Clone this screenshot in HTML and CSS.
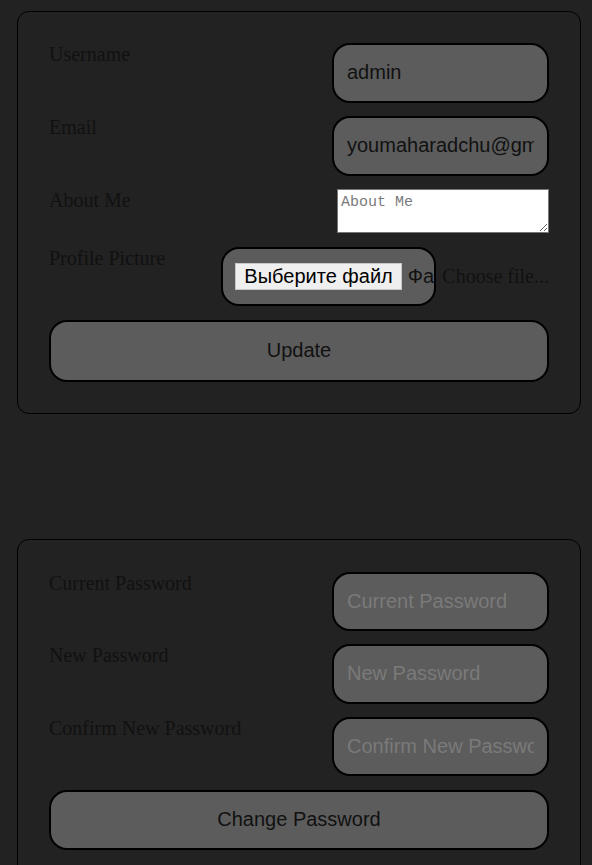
FILE: index.html
```html
<!DOCTYPE html>
<html>
<head>
<meta charset="utf-8">
<link rel="stylesheet" href="styles.css">
</head>
<body>
<main class="page">
  <form class="card">
    <div class="row">
      <label class="label">Username</label>
      <input class="field" type="text" value="admin">
    </div>
    <div class="row">
      <label class="label">Email</label>
      <input class="field" type="text" value="youmaharadchu@gmail.com">
    </div>
    <div class="row">
      <label class="label">About Me</label>
      <textarea class="about" placeholder="About Me"></textarea>
    </div>
    <div class="row">
      <label class="label">Profile Picture</label>
      <div class="file-group">
        <div class="file-input"><span class="file-btn">Выберите файл</span><span class="file-name">Файл не выбран</span></div>
        <span class="file-hint">Choose file...</span>
      </div>
    </div>
    <button type="button" class="btn">Update</button>
  </form>

  <form class="card card-second">
    <div class="row">
      <label class="label">Current Password</label>
      <input class="field" type="password" placeholder="Current Password">
    </div>
    <div class="row">
      <label class="label">New Password</label>
      <input class="field" type="password" placeholder="New Password">
    </div>
    <div class="row">
      <label class="label">Confirm New Password</label>
      <input class="field" type="password" placeholder="Confirm New Password">
    </div>
    <button type="button" class="btn btn-second">Change Password</button>
  </form>
</main>
</body>
</html>
```
FILE: styles.css
```css
html, body {
  margin: 0;
  padding: 0;
  background: #222222;
}
.page {
  padding: 11px 11px 0 17px;
  display: flex;
  flex-direction: column;
  gap: 125px;
}
.card {
  border: 1px solid #000;
  border-radius: 12px;
  background: #222222;
  padding: 31px;
  display: flex;
  flex-direction: column;
  gap: 13.5px;
  margin: 0;
}
.card-second {
  padding-top: 32px;
  gap: 13.2px;
}
.row {
  display: flex;
  justify-content: space-between;
  align-items: flex-start;
}
.label {
  font-family: "Liberation Serif", serif;
  font-size: 20px;
  color: #111;
  line-height: 23px;
}
.field {
  box-sizing: border-box;
  width: 217px;
  height: 59.5px;
  border: 2px solid #000;
  border-radius: 18px;
  background: #5c5c5c;
  padding: 0 13px;
  font-family: "Liberation Sans", Arial, sans-serif;
  font-size: 20px;
  color: #111;
  outline: none;
  margin: 0;
}
.field::placeholder {
  color: #7a7a7a;
}
.about {
  box-sizing: border-box;
  width: 212px;
  height: 44px;
  margin: 0;
  border: 1px solid #767676;
  background: #fff;
  padding: 4px 3px 2px;
  font-family: "Liberation Mono", monospace;
  font-size: 15px;
}
.about::placeholder {
  color: #7b7b7b;
}
.file-group {
  display: flex;
  align-items: center;
  gap: 6px;
}
.file-input {
  box-sizing: border-box;
  width: 215px;
  height: 59.5px;
  border: 2px solid #000;
  border-radius: 18px;
  background: #5c5c5c;
  padding: 0 0 0 12px;
  display: flex;
  align-items: center;
  overflow: hidden;
  white-space: nowrap;
  font-family: "Liberation Sans", Arial, sans-serif;
  font-size: 20px;
  color: #111;
}
.file-btn {
  flex: none;
  background: #efefef;
  border: 1px solid #c8c8c8;
  padding: 1px 8px;
  line-height: 23px;
  color: #000;
  margin-right: 6px;
}
.file-name {
  flex: 1 1 auto;
  min-width: 0;
  overflow: hidden;
  text-overflow: clip;
}
.file-hint {
  font-family: "Liberation Serif", serif;
  font-size: 20px;
  color: #111;
}
.btn {
  box-sizing: border-box;
  width: 100%;
  height: 62px;
  border: 2px solid #000;
  border-radius: 18px;
  background: #5c5c5c;
  font-family: "Liberation Sans", Arial, sans-serif;
  font-size: 20px;
  color: #111;
  margin: 0;
  padding: 0;
}
.btn-second {
  height: 60.5px;
}
```
